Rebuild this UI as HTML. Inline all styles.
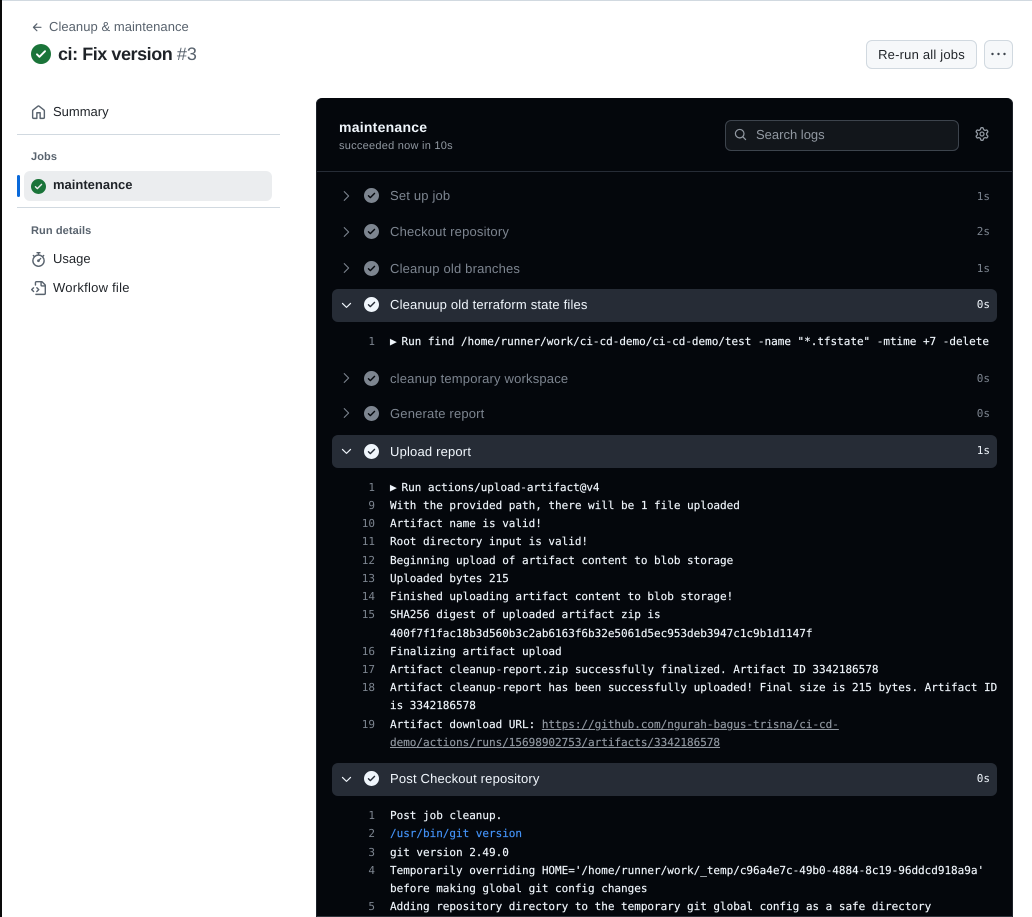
<!DOCTYPE html>
<html lang="en"><head><meta charset="utf-8"><title>ci: Fix version #3</title>
<style>
html,body{margin:0;padding:0;background:#fff}
body{width:1032px;height:917px;position:relative;overflow:hidden;font-family:"Liberation Sans",sans-serif;text-rendering:geometricPrecision}
.a{position:absolute;white-space:pre}
svg{position:absolute;display:block}
.s{font-size:13px;line-height:18px;color:#1f2328}
.m{font-size:11px;font-weight:bold;line-height:16px;color:#59636e;letter-spacing:.1px}
.step{font-size:13px;line-height:18px;left:390px;letter-spacing:.18px}
.g{color:#7d8590}.w{color:#f0f6fc}
.t{font-family:"DejaVu Sans Mono",monospace;font-size:11px;line-height:16px;right:42px}
.l{font-family:"DejaVu Sans Mono",monospace;font-size:11px;line-height:18px;left:390px;color:#f0f6fc;letter-spacing:-.022px;-webkit-text-stroke:.15px currentColor}
.n{font-family:"DejaVu Sans Mono",monospace;font-size:11px;line-height:18px;right:657px;color:#7d8590}
.ar{display:inline-block;width:11.5px;overflow:visible}
.bar{position:absolute;left:332px;width:665px;height:33px;background:#262c36;border-radius:6px}
a{color:#9198a1;text-decoration:underline}
</style></head><body>
<svg width="0" height="0" style="position:absolute"><defs>
<symbol id="c" viewBox="0 0 16 16"><path fill-rule="evenodd" d="M8 16A8 8 0 1 1 8 0a8 8 0 0 1 0 16Zm3.78-9.72a.751.751 0 0 0-.018-1.042.751.751 0 0 0-1.042-.018L6.75 9.19 5.28 7.72a.751.751 0 0 0-1.042.018.751.751 0 0 0-.018 1.042l2 2a.75.75 0 0 0 1.06 0Z"/></symbol>
<symbol id="r" viewBox="0 0 16 16"><path fill="none" stroke="#7d8590" stroke-width="1.25" stroke-linecap="round" stroke-linejoin="round" d="M6 3l5 5-5 5"/></symbol>
<symbol id="d" viewBox="0 0 16 16"><path fill="none" stroke="#f0f6fc" stroke-width="1.3" stroke-linecap="round" stroke-linejoin="round" d="M3.7 5.8 8 10l4.3-4.2"/></symbol>
</defs></svg>

<div class="a" style="left:0;top:0;width:1032px;height:1px;background:#d1d9e0"></div>
<div class="a" style="left:0;top:0;width:2px;height:917px;background:#0a0a0a"></div>

<svg style="left:31px;top:21px" width="13" height="13" viewBox="0 0 16 16" fill="#59636e"><path d="M7.78 12.53a.75.75 0 0 1-1.06 0L2.47 8.28a.75.75 0 0 1 0-1.06l4.25-4.25a.751.751 0 0 1 1.042.018.751.751 0 0 1 .018 1.042L4.81 7h7.44a.75.75 0 0 1 0 1.5H4.81l2.97 2.97a.75.75 0 0 1 0 1.06Z"/></svg>
<div class="a" style="left:49px;top:18px;font-size:13px;line-height:18px;color:#59636e;letter-spacing:.05px">Cleanup &amp; maintenance</div>
<svg style="left:31px;top:44px" width="20" height="20" fill="#1a7439"><use href="#c"/></svg>
<div class="a" style="left:58px;top:42px;font-size:18px;line-height:25px;font-weight:bold;color:#1f2328;letter-spacing:-.45px">ci: Fix version <span style="font-weight:normal;color:#59636e;letter-spacing:0">#3</span></div>

<div class="a" style="left:866px;top:40px;width:109px;height:27px;border:1px solid #d1d9e0;border-radius:6px;background:#f6f8fa;font-size:13px;line-height:27px;text-align:center;color:#1f2328;letter-spacing:.2px">Re-run all jobs</div>
<div class="a" style="left:984px;top:40px;width:27px;height:27px;border:1px solid #d1d9e0;border-radius:6px;background:#f6f8fa"></div>
<svg style="left:990px;top:46px" width="17" height="16" viewBox="0 0 17 16" fill="#3d444d"><circle cx="2.5" cy="8" r="1.2"/><circle cx="8.5" cy="8" r="1.2"/><circle cx="14.5" cy="8" r="1.2"/></svg>

<svg style="left:31px;top:105px" width="15" height="15" viewBox="0 0 16 16" fill="#59636e"><path d="M6.906.664a1.749 1.749 0 0 1 2.187 0l5.25 4.2c.415.332.657.835.657 1.367v7.019A1.75 1.75 0 0 1 13.25 15h-3.5a.75.75 0 0 1-.75-.75V9H7v5.25a.75.75 0 0 1-.75.75h-3.5A1.75 1.75 0 0 1 1 13.25V6.23c0-.531.242-1.034.657-1.366l5.25-4.2Zm1.25 1.171a.25.25 0 0 0-.312 0l-5.25 4.2a.25.25 0 0 0-.094.196v7.019c0 .138.112.25.25.25H5.5V8.25a.75.75 0 0 1 .75-.75h3.5a.75.75 0 0 1 .75.75v5.25h2.75a.25.25 0 0 0 .25-.25V6.23a.25.25 0 0 0-.094-.195Z"/></svg>
<div class="a s" style="left:53px;top:103px">Summary</div>
<div class="a" style="left:17px;top:134px;width:263px;height:1px;background:#d1d9e0"></div>
<div class="a m" style="left:31px;top:149px">Jobs</div>
<div class="a" style="left:17px;top:175px;width:3px;height:22px;background:#0969da;border-radius:2px"></div>
<div class="a" style="left:24px;top:171px;width:248px;height:30px;background:#ebedef;border-radius:6px"></div>
<svg style="left:31px;top:179px" width="15" height="15" fill="#1a7439"><use href="#c"/></svg>
<div class="a s" style="left:53px;top:176px;font-weight:bold">maintenance</div>
<div class="a" style="left:17px;top:207px;width:263px;height:1px;background:#d1d9e0"></div>
<div class="a m" style="left:31px;top:223px">Run details</div>
<svg style="left:31px;top:252px" width="15" height="15" viewBox="0 0 16 16" fill="#59636e"><path d="M5.75.75A.75.75 0 0 1 6.5 0h3a.75.75 0 0 1 0 1.5h-.75v1l-.001.041a6.724 6.724 0 0 1 3.464 1.435l.007-.006.75-.75a.749.749 0 0 1 1.275.326.749.749 0 0 1-.215.734l-.75.75-.006.007a6.75 6.75 0 1 1-10.548 0L2.72 5.03l-.75-.75a.751.751 0 0 1 .018-1.042.751.751 0 0 1 1.042-.018l.75.75.007.006A6.72 6.72 0 0 1 7.25 2.541V1.5H6.5a.75.75 0 0 1-.75-.75ZM8 14.5a5.25 5.25 0 1 0-.001-10.501A5.25 5.25 0 0 0 8 14.5Zm.389-6.7 1.33-1.33a.75.75 0 1 1 1.061 1.06L9.45 8.861A1.503 1.503 0 0 1 8 10.75a1.499 1.499 0 1 1 .389-2.95Z"/></svg>
<div class="a s" style="left:53px;top:250px">Usage</div>
<svg style="left:31px;top:281px" width="15" height="15" viewBox="0 0 16 16" fill="#59636e"><path d="M4 1.75C4 .784 4.784 0 5.75 0h5.586c.464 0 .909.184 1.237.513l2.914 2.914c.329.328.513.773.513 1.237v8.586A1.75 1.75 0 0 1 14.25 15h-9a.75.75 0 0 1 0-1.5h9a.25.25 0 0 0 .25-.25V6h-2.75A1.75 1.75 0 0 1 10 4.25V1.5H5.75a.25.25 0 0 0-.25.25v2.5a.75.75 0 0 1-1.5 0Zm1.72 4.97a.75.75 0 0 1 1.06 0l2 2a.75.75 0 0 1 0 1.06l-2 2a.749.749 0 0 1-1.275-.326.749.749 0 0 1 .215-.734l1.47-1.47-1.47-1.47a.75.75 0 0 1 0-1.06ZM3.28 7.78 1.81 9.25l1.47 1.47a.751.751 0 0 1-.018 1.042.751.751 0 0 1-1.042.018l-2-2a.75.75 0 0 1 0-1.06l2-2a.751.751 0 0 1 1.042.018.751.751 0 0 1 .018 1.042Zm8.22-6.218V4.25c0 .138.112.25.25.25h2.688l-.011-.013-2.914-2.914-.013-.011Z"/></svg>
<div class="a s" style="left:53px;top:279px;letter-spacing:.25px">Workflow file</div>

<div class="a" style="left:316px;top:98px;width:697px;height:819px;background:#04070c;border-radius:6px 6px 0 0;box-shadow:inset 1px 0 0 #1c2128,inset -1px 0 0 #1c2128,inset 0 -1px 0 #30363d"></div>
<div class="a" style="left:339px;top:118px;font-size:14px;line-height:18px;font-weight:bold;color:#f0f6fc;letter-spacing:.25px">maintenance</div>
<div class="a" style="left:339px;top:138px;font-size:11px;line-height:16px;color:#9198a1;letter-spacing:.25px">succeeded now in 10s</div>
<div class="a" style="left:725px;top:120px;width:232px;height:29px;background:#12161b;border:1px solid #3d444d;border-radius:6px"></div>
<svg style="left:734px;top:128px" width="13" height="13" viewBox="0 0 16 16" fill="#9198a1"><path d="M10.68 11.74a6 6 0 0 1-7.922-8.982 6 6 0 0 1 8.982 7.922l3.04 3.04a.749.749 0 0 1-.326 1.275.749.749 0 0 1-.734-.215ZM11.5 7a4.499 4.499 0 1 0-8.997 0A4.499 4.499 0 0 0 11.5 7Z"/></svg>
<div class="a" style="left:756px;top:126px;font-size:13px;line-height:18px;color:#9198a1">Search logs</div>
<svg style="left:975px;top:127px" width="14" height="14" viewBox="0 0 16 16" fill="#9198a1"><path fill-rule="evenodd" d="M8 0a8.2 8.2 0 0 1 .701.031C9.444.095 9.99.645 10.16 1.29l.288 1.107c.018.066.079.158.212.224.231.114.454.243.668.386.123.082.233.09.299.071l1.103-.303c.644-.176 1.392.021 1.82.63.27.385.506.792.704 1.218.315.675.111 1.422-.364 1.891l-.814.806c-.049.048-.098.147-.088.294.016.257.016.515 0 .772-.01.147.038.246.088.294l.814.806c.475.469.679 1.216.364 1.891a7.977 7.977 0 0 1-.704 1.217c-.428.61-1.176.807-1.82.63l-1.102-.302c-.067-.019-.177-.011-.3.071a5.909 5.909 0 0 1-.668.386c-.133.066-.194.158-.211.224l-.29 1.106c-.168.646-.715 1.196-1.458 1.26a8.006 8.006 0 0 1-1.402 0c-.743-.064-1.289-.614-1.458-1.26l-.289-1.106c-.018-.066-.079-.158-.212-.224a5.738 5.738 0 0 1-.668-.386c-.123-.082-.233-.09-.299-.071l-1.103.303c-.644.176-1.392-.021-1.82-.63a8.12 8.12 0 0 1-.704-1.218c-.315-.675-.111-1.422.363-1.891l.815-.806c.05-.048.098-.147.088-.294a6.214 6.214 0 0 1 0-.772c.01-.147-.038-.246-.088-.294l-.815-.806C.635 6.045.431 5.298.746 4.623a7.92 7.92 0 0 1 .704-1.217c.428-.61 1.176-.807 1.82-.63l1.102.302c.067.019.177.011.3-.071.214-.143.437-.272.668-.386.133-.066.194-.158.211-.224l.29-1.106C6.009.645 6.556.095 7.299.03 7.53.01 7.764 0 8 0Zm-.571 1.525c-.036.003-.108.036-.137.146l-.289 1.105c-.147.561-.549.967-.998 1.189-.173.086-.34.183-.5.29-.417.278-.97.423-1.529.27l-1.103-.303c-.109-.03-.175.016-.195.045-.22.312-.412.644-.573.99-.014.031-.021.11.059.19l.815.806c.411.406.562.957.53 1.456a4.709 4.709 0 0 0 0 .582c.032.499-.119 1.05-.53 1.456l-.815.806c-.081.08-.073.159-.059.19.162.346.353.677.573.989.02.03.085.076.195.046l1.102-.303c.56-.153 1.113-.008 1.53.27.161.107.328.204.501.29.447.222.85.629.997 1.189l.289 1.105c.029.109.101.143.137.146a6.6 6.6 0 0 0 1.142 0c.036-.003.108-.036.137-.146l.289-1.105c.147-.561.549-.967.998-1.189.173-.086.34-.183.5-.29.417-.278.97-.423 1.529-.27l1.103.303c.109.029.175-.016.195-.045.22-.313.411-.644.573-.99.014-.031.021-.11-.059-.19l-.815-.806c-.411-.406-.562-.957-.53-1.456a4.709 4.709 0 0 0 0-.582c-.032-.499.119-1.05.53-1.456l.815-.806c.081-.08.073-.159.059-.19a6.464 6.464 0 0 0-.573-.989c-.02-.03-.085-.076-.195-.046l-1.102.303c-.56.153-1.113.008-1.53-.27a4.44 4.44 0 0 0-.501-.29c-.447-.222-.85-.629-.997-1.189l-.289-1.105c-.029-.11-.101-.143-.137-.146a6.6 6.6 0 0 0-1.142 0ZM11 8a3 3 0 1 1-6 0 3 3 0 0 1 6 0ZM9.5 8a1.5 1.5 0 1 0-3.001.001A1.5 1.5 0 0 0 9.5 8Z"/></svg>
<div class="a" style="left:317px;top:171px;width:695px;height:1px;background:#262c36"></div>

<svg style="left:339px;top:189px" width="14" height="14"><use href="#r"/></svg>
<svg style="left:364px;top:188px" width="15" height="15" fill="#7d8590"><use href="#c"/></svg>
<div class="a step g" style="top:187px">Set up job</div><div class="a t g" style="top:189px">1s</div>
<svg style="left:339px;top:225px" width="14" height="14"><use href="#r"/></svg>
<svg style="left:364px;top:224px" width="15" height="15" fill="#7d8590"><use href="#c"/></svg>
<div class="a step g" style="top:223px">Checkout repository</div><div class="a t g" style="top:224px">2s</div>
<svg style="left:339px;top:261px" width="14" height="14"><use href="#r"/></svg>
<svg style="left:364px;top:261px" width="15" height="15" fill="#7d8590"><use href="#c"/></svg>
<div class="a step g" style="top:260px">Cleanup old branches</div><div class="a t g" style="top:261px">1s</div>

<div class="bar" style="top:289px"></div>
<svg style="left:339px;top:298px" width="15" height="15"><use href="#d"/></svg>
<svg style="left:364px;top:297px" width="15" height="15" fill="#f0f6fc"><use href="#c"/></svg>
<div class="a step w" style="top:296px">Cleanuup old terraform state files</div><div class="a t w" style="top:297px">0s</div>
<div class="a n" style="top:333px">1</div>
<div class="a l" style="top:333px"><span class="ar">▶</span>Run find /home/runner/work/ci-cd-demo/ci-cd-demo/test -name "*.tfstate" -mtime +7 -delete</div>

<svg style="left:339px;top:371px" width="14" height="14"><use href="#r"/></svg>
<svg style="left:364px;top:371px" width="15" height="15" fill="#7d8590"><use href="#c"/></svg>
<div class="a step g" style="top:370px">cleanup temporary workspace</div><div class="a t g" style="top:371px">0s</div>
<svg style="left:339px;top:406px" width="14" height="14"><use href="#r"/></svg>
<svg style="left:364px;top:406px" width="15" height="15" fill="#7d8590"><use href="#c"/></svg>
<div class="a step g" style="top:405px">Generate report</div><div class="a t g" style="top:406px">0s</div>

<div class="bar" style="top:435px"></div>
<svg style="left:339px;top:444px" width="15" height="15"><use href="#d"/></svg>
<svg style="left:364px;top:444px" width="15" height="15" fill="#f0f6fc"><use href="#c"/></svg>
<div class="a step w" style="top:443px">Upload report</div><div class="a t w" style="top:443px">1s</div>

<div class="a n" style="top:479px">1</div><div class="a l" style="top:479px"><span class="ar">▶</span>Run actions/upload-artifact@v4</div>
<div class="a n" style="top:497px">9</div><div class="a l" style="top:497px">With the provided path, there will be 1 file uploaded</div>
<div class="a n" style="top:515px">10</div><div class="a l" style="top:515px">Artifact name is valid!</div>
<div class="a n" style="top:533px">11</div><div class="a l" style="top:533px">Root directory input is valid!</div>
<div class="a n" style="top:552px">12</div><div class="a l" style="top:552px">Beginning upload of artifact content to blob storage</div>
<div class="a n" style="top:570px">13</div><div class="a l" style="top:570px">Uploaded bytes 215</div>
<div class="a n" style="top:588px">14</div><div class="a l" style="top:588px">Finished uploading artifact content to blob storage!</div>
<div class="a n" style="top:606px">15</div><div class="a l" style="top:606px">SHA256 digest of uploaded artifact zip is</div>
<div class="a l" style="top:625px">400f7f1fac18b3d560b3c2ab6163f6b32e5061d5ec953deb3947c1c9b1d1147f</div>
<div class="a n" style="top:643px">16</div><div class="a l" style="top:643px">Finalizing artifact upload</div>
<div class="a n" style="top:661px">17</div><div class="a l" style="top:661px">Artifact cleanup-report.zip successfully finalized. Artifact ID 3342186578</div>
<div class="a n" style="top:679px">18</div><div class="a l" style="top:679px">Artifact cleanup-report has been successfully uploaded! Final size is 215 bytes. Artifact ID</div>
<div class="a l" style="top:697px">is 3342186578</div>
<div class="a n" style="top:716px">19</div><div class="a l" style="top:716px">Artifact download URL: <a>https://github.com/ngurah-bagus-trisna/ci-cd-</a></div>
<div class="a l" style="top:734px"><a>demo/actions/runs/15698902753/artifacts/3342186578</a></div>

<div class="bar" style="top:763px"></div>
<svg style="left:339px;top:772px" width="15" height="15"><use href="#d"/></svg>
<svg style="left:364px;top:771px" width="15" height="15" fill="#f0f6fc"><use href="#c"/></svg>
<div class="a step w" style="top:770px">Post Checkout repository</div><div class="a t w" style="top:771px">0s</div>

<div class="a n" style="top:807px">1</div><div class="a l" style="top:807px">Post job cleanup.</div>
<div class="a n" style="top:825px">2</div><div class="a l" style="top:825px;color:#4493f8">/usr/bin/git version</div>
<div class="a n" style="top:844px">3</div><div class="a l" style="top:844px">git version 2.49.0</div>
<div class="a n" style="top:862px">4</div><div class="a l" style="top:862px">Temporarily overriding HOME='/home/runner/work/_temp/c96a4e7c-49b0-4884-8c19-96ddcd918a9a'</div>
<div class="a l" style="top:880px">before making global git config changes</div>
<div class="a n" style="top:898px">5</div><div class="a l" style="top:898px">Adding repository directory to the temporary git global config as a safe directory</div>
</body></html>
